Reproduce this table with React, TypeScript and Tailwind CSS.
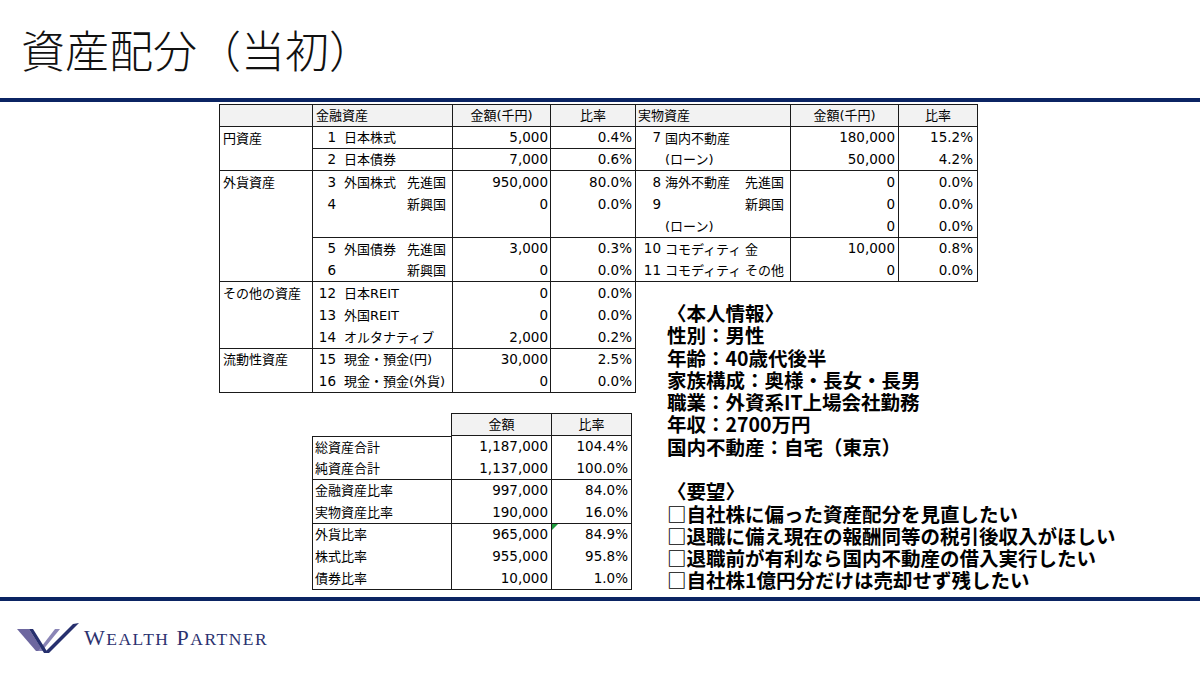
import React from "react";

type LRow = { n?: string; label?: string; suf?: string; amt?: string; pct?: string; bb?: boolean };

const leftGroups: { name: string; span: number; rows: LRow[] }[] = [
  {
    name: "円資産",
    span: 2,
    rows: [
      { n: "1", label: "日本株式", amt: "5,000", pct: "0.4%", bb: true },
      { n: "2", label: "日本債券", amt: "7,000", pct: "0.6%", bb: true },
    ],
  },
  {
    name: "外貨資産",
    span: 5,
    rows: [
      { n: "3", label: "外国株式", suf: "先進国", amt: "950,000", pct: "80.0%" },
      { n: "4", label: "", suf: "新興国", amt: "0", pct: "0.0%" },
      { bb: true },
      { n: "5", label: "外国債券", suf: "先進国", amt: "3,000", pct: "0.3%" },
      { n: "6", label: "", suf: "新興国", amt: "0", pct: "0.0%", bb: true },
    ],
  },
  {
    name: "その他の資産",
    span: 3,
    rows: [
      { n: "12", label: "日本REIT", amt: "0", pct: "0.0%" },
      { n: "13", label: "外国REIT", amt: "0", pct: "0.0%" },
      { n: "14", label: "オルタナティブ", amt: "2,000", pct: "0.2%", bb: true },
    ],
  },
  {
    name: "流動性資産",
    span: 2,
    rows: [
      { n: "15", label: "現金・預金(円)", amt: "30,000", pct: "2.5%" },
      { n: "16", label: "現金・預金(外貨)", amt: "0", pct: "0.0%", bb: true },
    ],
  },
];

const rightRows: LRow[] = [
  { n: "7", label: "国内不動産", amt: "180,000", pct: "15.2%" },
  { n: "", label: "(ローン)", amt: "50,000", pct: "4.2%", bb: true },
  { n: "8", label: "海外不動産", suf: "先進国", amt: "0", pct: "0.0%" },
  { n: "9", label: "", suf: "新興国", amt: "0", pct: "0.0%" },
  { n: "", label: "(ローン)", amt: "0", pct: "0.0%", bb: true },
  { n: "10", label: "コモディティ", suf: "金", amt: "10,000", pct: "0.8%" },
  { n: "11", label: "コモディティ", suf: "その他", amt: "0", pct: "0.0%", bb: true },
];

const summaryRows: { label: string; amt: string; pct: string; bb?: boolean; tri?: boolean }[] = [
  { label: "総資産合計", amt: "1,187,000", pct: "104.4%" },
  { label: "純資産合計", amt: "1,137,000", pct: "100.0%", bb: true },
  { label: "金融資産比率", amt: "997,000", pct: "84.0%" },
  { label: "実物資産比率", amt: "190,000", pct: "16.0%", bb: true },
  { label: "外貨比率", amt: "965,000", pct: "84.9%", tri: true },
  { label: "株式比率", amt: "955,000", pct: "95.8%" },
  { label: "債券比率", amt: "10,000", pct: "1.0%", bb: true },
];

const infoLines = [
  "〈本人情報〉",
  "性別：男性",
  "年齢：40歳代後半",
  "家族構成：奥様・長女・長男",
  "職業：外資系IT上場会社勤務",
  "年収：2700万円",
  "国内不動産：自宅（東京）",
  "",
  "〈要望〉",
  "□自社株に偏った資産配分を見直したい",
  "□退職に備え現在の報酬同等の税引後収入がほしい",
  "□退職前が有利なら国内不動産の借入実行したい",
  "□自社株1億円分だけは売却せず残したい",
];

function LeftLabel({ r }: { r: LRow }) {
  return (
    <div
      className={`col-start-2 grid grid-cols-[23px_71px_1fr] items-center border-r border-[#1a1a1a] ${r.bb ? "border-b" : ""}`}
    >
      <span className="text-right text-[13.5px]">{r.n}</span>
      <span className={`pl-[8px] whitespace-nowrap ${r.suf ? "" : "col-span-2"}`}>{r.label}</span>
      {r.suf ? <span className="whitespace-nowrap">{r.suf}</span> : null}
    </div>
  );
}

function RightLabel({ r }: { r: LRow }) {
  return (
    <div
      className={`grid grid-cols-[25px_84px_1fr] items-center border-r border-[#1a1a1a] ${r.bb ? "border-b" : ""}`}
    >
      <span className="text-right text-[13.5px]">{r.n}</span>
      <span className={`pl-[4px] whitespace-nowrap ${r.suf ? "" : "col-span-2"}`}>{r.label}</span>
      {r.suf ? <span className="whitespace-nowrap">{r.suf}</span> : null}
    </div>
  );
}

function NumCell({ v, bb, pr }: { v?: string; bb?: boolean; pr: "2" | "3" | "4" }) {
  const prc = pr === "2" ? "pr-[2px]" : pr === "3" ? "pr-[3px]" : "pr-[4px]";
  return (
    <div
      className={`flex items-center justify-end text-[13.5px] border-r border-[#1a1a1a] ${prc} ${bb ? "border-b" : ""}`}
    >
      {v}
    </div>
  );
}

function LeftTable() {
  return (
    <div className="grid w-[417px] grid-cols-[93px_140px_98px_85px] grid-rows-[22px_repeat(12,22.2px)] border-l border-t border-[#1a1a1a]">
      <div className="bg-[#f2f2f2] border-r border-b border-[#1a1a1a]" />
      <div className="bg-[#f2f2f2] border-r border-b border-[#1a1a1a] flex items-center pl-[3px]">金融資産</div>
      <div className="bg-[#f2f2f2] border-r border-b border-[#1a1a1a] flex items-center justify-center">金額(千円)</div>
      <div className="bg-[#f2f2f2] border-r border-b border-[#1a1a1a] flex items-center justify-center">比率</div>
      {leftGroups.map((g, gi) => (
        <React.Fragment key={gi}>
          <div
            className={`col-start-1 border-r border-b border-[#1a1a1a] pl-[3px] ${
              g.span === 2 ? "row-span-2" : g.span === 3 ? "row-span-3" : "row-span-5"
            }`}
          >
            <div className="flex h-[22.2px] items-center whitespace-nowrap">{g.name}</div>
          </div>
          {g.rows.map((r, ri) => (
            <React.Fragment key={ri}>
              <LeftLabel r={r} />
              <NumCell v={r.amt} bb={r.bb} pr="2" />
              <NumCell v={r.pct} bb={r.bb} pr="3" />
            </React.Fragment>
          ))}
        </React.Fragment>
      ))}
    </div>
  );
}

function RightTable() {
  return (
    <div className="grid w-[342px] grid-cols-[155px_108px_79px] grid-rows-[22px_repeat(7,22.2px)] border-t border-[#1a1a1a]">
      <div className="bg-[#f2f2f2] border-r border-b border-[#1a1a1a] flex items-center pl-[2px]">実物資産</div>
      <div className="bg-[#f2f2f2] border-r border-b border-[#1a1a1a] flex items-center justify-center">金額(千円)</div>
      <div className="bg-[#f2f2f2] border-r border-b border-[#1a1a1a] flex items-center justify-center">比率</div>
      {rightRows.map((r, ri) => (
        <React.Fragment key={ri}>
          <RightLabel r={r} />
          <NumCell v={r.amt} bb={r.bb} pr="3" />
          <NumCell v={r.pct} bb={r.bb} pr="4" />
        </React.Fragment>
      ))}
    </div>
  );
}

function SummaryTable() {
  return (
    <div className="ml-[93px] mt-[19.6px] grid w-[320px] grid-cols-[140px_100px_80px] grid-rows-[23px_repeat(7,22px)]">
      <div className="border-r border-[#1a1a1a]" />
      <div className="bg-[#f2f2f2] border-t border-r border-b border-[#1a1a1a] flex items-center justify-center">金額</div>
      <div className="bg-[#f2f2f2] border-t border-r border-b border-[#1a1a1a] flex items-center justify-center">比率</div>
      {summaryRows.map((r, i) => (
        <React.Fragment key={i}>
          <div
            className={`flex items-center pl-[2px] border-l border-r border-[#1a1a1a] ${i === 0 ? "border-t" : ""} ${
              r.bb ? "border-b" : ""
            }`}
          >
            {r.label}
          </div>
          <NumCell v={r.amt} bb={r.bb} pr="3" />
          <div
            className={`relative flex items-center justify-end pr-[3px] text-[13.5px] border-r border-[#1a1a1a] ${
              r.bb ? "border-b" : ""
            }`}
          >
            {r.tri ? (
              <span className="absolute left-0 top-0 h-0 w-0 border-t-[6px] border-r-[6px] border-t-[#1e9a3c] border-r-transparent" />
            ) : null}
            {r.pct}
          </div>
        </React.Fragment>
      ))}
    </div>
  );
}

function Logo() {
  return (
    <div className="flex items-center gap-[5px]">
      <svg width="62" height="34" viewBox="0 0 62 34">
        <polygon points="0,8 12,8 26,30 19,30" fill="#6d679f" />
        <polygon points="21,30 25,30 43,8 38,8" fill="#8a85b6" />
        <polygon points="12,8 16,8 31,32 27,32" fill="#27306e" />
        <polygon points="27,32 32,32 62,2 56,3" fill="#27306e" />
      </svg>
      <div className="font-['Liberation_Serif',serif] text-[#2c326f] tracking-[1.5px] leading-none whitespace-nowrap">
        <span className="text-[22px]">W</span>
        <span className="text-[17.5px]">EALTH</span>
        <span className="text-[22px]"> P</span>
        <span className="text-[17.5px]">ARTNER</span>
      </div>
    </div>
  );
}

export default function App() {
  return (
    <div className="flex h-[675px] w-[1200px] flex-col overflow-hidden bg-white text-black">
      <header className="flex h-[98px] items-center pl-[21px]">
        <h1 className="font-['Noto_Sans_CJK_JP',sans-serif] text-[44px] font-light leading-none text-[#111]">
          資産配分（当初）
        </h1>
      </header>
      <div className="h-[4px] bg-[#0b2463]" />
      <main className="flex h-[495px] pl-[219px] pt-[2px] font-['DejaVu_Sans','Noto_Sans_CJK_JP',sans-serif] text-[13px] leading-none">
        <div className="flex flex-col">
          <LeftTable />
          <SummaryTable />
        </div>
        <div className="flex flex-col">
          <RightTable />
          <div className="mt-[19.6px] pl-[31px] font-['Noto_Sans_CJK_JP',sans-serif] text-[19.5px] font-bold leading-[22.3px] whitespace-nowrap">
            {infoLines.map((l, i) => (
              <div key={i} className="h-[22.3px]">
                {l}
              </div>
            ))}
          </div>
        </div>
      </main>
      <div className="h-[4px] bg-[#0b2463]" />
      <footer className="flex flex-1 items-center pl-[17px]">
        <Logo />
      </footer>
    </div>
  );
}
